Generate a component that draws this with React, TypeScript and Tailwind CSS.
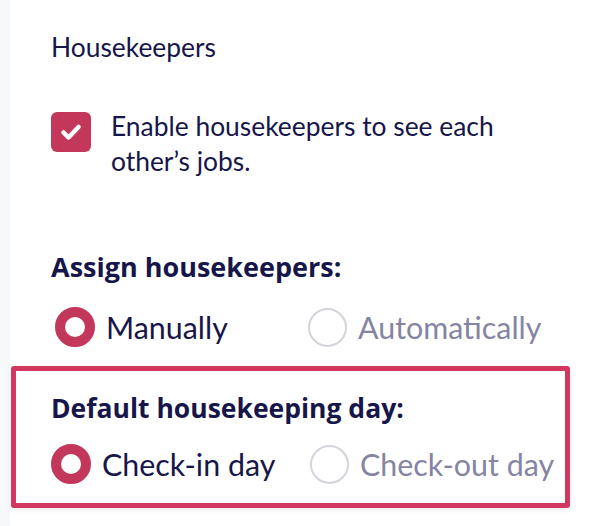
import React from "react";

const body = { fontFamily: 'Lato, "Noto Sans", sans-serif' };
const head = { fontFamily: '"Open Sans", "Noto Sans", sans-serif' };

function Radio({ checked, label, width }: { checked: boolean; label: string; width?: string }) {
  return (
    <label className={`flex items-center gap-[11px] shrink-0 ${width ?? ""}`}>
      {checked ? (
        <span className="w-10 h-10 shrink-0 rounded-full border-[10px] border-[#c3375a] bg-white" />
      ) : (
        <span className="w-[39px] h-[39px] shrink-0 rounded-full border-2 border-[#d3d4dc] bg-white" />
      )}
      <span
        className={`text-[30.4px] leading-none ${checked ? "text-[#17164a]" : "text-[#8584a3]"}`}
        style={body}
      >
        {label}
      </span>
    </label>
  );
}

export default function App() {
  return (
    <div className="flex w-[594px] h-[526px] bg-white overflow-hidden">
      <div className="w-[10px] shrink-0 bg-[#f7f8fa]" />
      <div className="flex-1 pl-[1px]">
        <div className="pl-[40px] pt-[31px]">
          <h2 className="text-[26.4px] leading-[32px] text-[#17164a]" style={body}>
            Housekeepers
          </h2>
          <div className="flex items-start gap-5 mt-[49px]">
            <span className="w-10 h-10 shrink-0 rounded-md bg-[#c3375a] flex items-center justify-center">
              <svg width="22" height="18" viewBox="0 0 22 18" fill="none">
                <path d="M3.5 9.5l5 5L18.5 4" stroke="white" strokeWidth="4.5" strokeLinecap="round" strokeLinejoin="round" />
              </svg>
            </span>
            <p className="w-[410px] text-[26.4px] leading-[35px] text-[#17164a] -mt-[3px]" style={body}>
              Enable housekeepers to see each other’s jobs.
            </p>
          </div>
          <h3 className="mt-[72px] text-[27px] font-bold leading-[32px] text-[#17164a]" style={head}>
            Assign housekeepers:
          </h3>
          <div className="flex mt-[24px] pl-[4px]">
            <Radio checked label="Manually" width="w-[253px]" />
            <Radio checked={false} label="Automatically" />
          </div>
        </div>
        <div className="mt-[19px] w-[559px] h-[142px] border-[5px] border-[#d1375f] rounded-[3px] shadow-[0_2px_6px_rgba(0,0,0,0.08)] pl-[35px] pt-[21px]">
          <h3 className="text-[26.5px] font-bold leading-[32px] text-[#17164a]" style={head}>
            Default housekeeping day:
          </h3>
          <div className="flex mt-[20px]">
            <Radio checked label="Check-in day" width="w-[259px]" />
            <Radio checked={false} label="Check-out day" />
          </div>
        </div>
      </div>
    </div>
  );
}
